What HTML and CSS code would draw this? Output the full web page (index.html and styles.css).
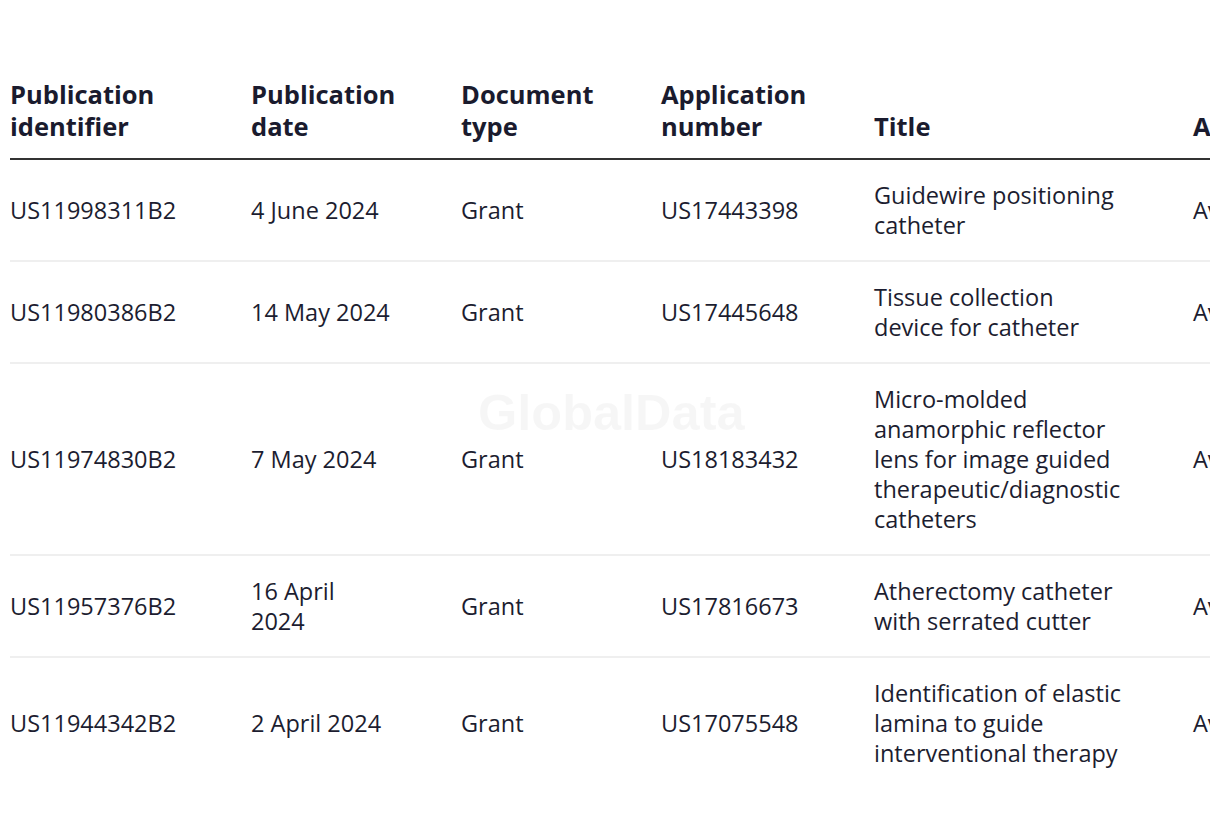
FILE: index.html
```html
<!DOCTYPE html>
<html lang="en">
<head>
<meta charset="utf-8">
<title>Patents</title>
<link rel="stylesheet" href="styles.css">
</head>
<body>
<div class="page">
  <div class="table-wrap">
    <table class="patents">
      <colgroup>
        <col class="c-id">
        <col class="c-date">
        <col class="c-type">
        <col class="c-app">
        <col class="c-title">
        <col class="c-assignee">
      </colgroup>
      <thead>
        <tr>
          <th>Publication identifier</th>
          <th>Publication date</th>
          <th>Document type</th>
          <th>Application number</th>
          <th>Title</th>
          <th>Assignee</th>
        </tr>
      </thead>
      <tbody>
        <tr>
          <td>US11998311B2</td>
          <td>4 June 2024</td>
          <td>Grant</td>
          <td>US17443398</td>
          <td>Guidewire positioning catheter</td>
          <td>Avinger Inc</td>
        </tr>
        <tr>
          <td>US11980386B2</td>
          <td>14 May 2024</td>
          <td>Grant</td>
          <td>US17445648</td>
          <td>Tissue collection device for catheter</td>
          <td>Avinger Inc</td>
        </tr>
        <tr>
          <td>US11974830B2</td>
          <td>7 May 2024</td>
          <td>Grant</td>
          <td>US18183432</td>
          <td>Micro-molded anamorphic reflector lens for image guided therapeutic/diagnostic catheters</td>
          <td>Avinger Inc</td>
        </tr>
        <tr>
          <td>US11957376B2</td>
          <td>16 April 2024</td>
          <td>Grant</td>
          <td>US17816673</td>
          <td>Atherectomy catheter with serrated cutter</td>
          <td>Avinger Inc</td>
        </tr>
        <tr>
          <td>US11944342B2</td>
          <td>2 April 2024</td>
          <td>Grant</td>
          <td>US17075548</td>
          <td>Identification of elastic lamina to guide interventional therapy</td>
          <td>Avinger Inc</td>
        </tr>
      </tbody>
    </table>
    <div class="watermark">GlobalData</div>
  </div>
</div>
</body>
</html>
```

FILE: styles.css
```css
html, body {
  margin: 0;
  padding: 0;
  background: #ffffff;
}

body {
  font-family: "Open Sans", "Liberation Sans", sans-serif;
  color: #1c1d30;
}

.page {
  padding: 78px 10px 0 10px;
}

.table-wrap {
  position: relative;
  width: 1200px;
  overflow: hidden;
}

.patents {
  border-collapse: collapse;
  table-layout: fixed;
  width: 1560px;
}

.c-id { width: 241px; }
.c-date { width: 210px; }
.c-type { width: 200px; }
.c-app { width: 213px; }
.c-title { width: 319px; }
.c-assignee { width: 377px; }

.patents th {
  text-align: left;
  vertical-align: bottom;
  font-size: 25.5px;
  font-weight: 700;
  line-height: 32px;
  padding: 0 40px 16px 0;
  border-bottom: 2px solid #333333;
  color: #1a1b2e;
}

.patents td {
  text-align: left;
  vertical-align: middle;
  font-size: 23.5px;
  font-weight: 400;
  line-height: 30px;
  padding: 20px 40px 20px 0;
  border-bottom: 2px solid #efefef;
}

.patents tbody tr:last-child td {
  border-bottom: none;
}

.patents td:nth-child(2) {
  padding-right: 69px;
}

.patents td:nth-child(5) {
  padding-right: 69px;
}

.watermark {
  position: absolute;
  left: 468px;
  top: 305px;
  font-family: "Liberation Sans", Arial, sans-serif;
  font-weight: 700;
  font-size: 50.5px;
  line-height: 60px;
  color: rgba(0, 0, 0, 0.035);
  pointer-events: none;
  z-index: 1;
}
```
